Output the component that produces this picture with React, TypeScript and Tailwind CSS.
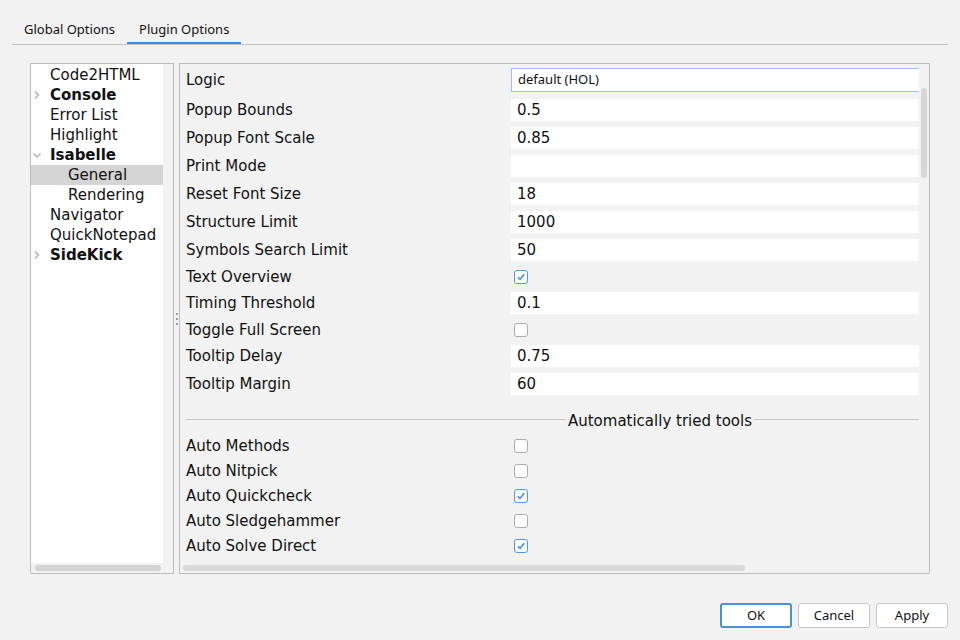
import { ReactNode } from "react";

const dejavu = { fontFamily: '"DejaVu Sans", sans-serif' };
const noto = { fontFamily: '"Noto Sans", sans-serif' };

const treeItems: { label: string; bold?: boolean; level: number; arrow?: "right" | "down"; selected?: boolean }[] = [
  { label: "Code2HTML", level: 0 },
  { label: "Console", level: 0, bold: true, arrow: "right" },
  { label: "Error List", level: 0 },
  { label: "Highlight", level: 0 },
  { label: "Isabelle", level: 0, bold: true, arrow: "down" },
  { label: "General", level: 1, selected: true },
  { label: "Rendering", level: 1 },
  { label: "Navigator", level: 0 },
  { label: "QuickNotepad", level: 0 },
  { label: "SideKick", level: 0, bold: true, arrow: "right" },
];

type Opt = { label: string; value?: string; check?: boolean };

const options: Opt[] = [
  { label: "Popup Bounds", value: "0.5" },
  { label: "Popup Font Scale", value: "0.85" },
  { label: "Print Mode", value: "" },
  { label: "Reset Font Size", value: "18" },
  { label: "Structure Limit", value: "1000" },
  { label: "Symbols Search Limit", value: "50" },
  { label: "Text Overview", check: true },
  { label: "Timing Threshold", value: "0.1" },
  { label: "Toggle Full Screen", check: false },
  { label: "Tooltip Delay", value: "0.75" },
  { label: "Tooltip Margin", value: "60" },
];

const autoTools: Opt[] = [
  { label: "Auto Methods", check: false },
  { label: "Auto Nitpick", check: false },
  { label: "Auto Quickcheck", check: true },
  { label: "Auto Sledgehammer", check: false },
  { label: "Auto Solve Direct", check: true },
];

const Arrow = ({ dir }: { dir: "right" | "down" }) => (
  <svg width="10" height="10" viewBox="0 0 10 10" className="shrink-0">
    {dir === "right" ? (
      <path d="M3 1.5 L6.5 5 L3 8.5" fill="none" stroke="#b0b0b0" strokeWidth="1.4" />
    ) : (
      <path d="M1.5 3.5 L5 7 L8.5 3.5" fill="none" stroke="#b0b0b0" strokeWidth="1.4" />
    )}
  </svg>
);

const CheckBox = ({ checked }: { checked: boolean }) => (
  <div
    className={`ml-[3px] w-[14px] h-[14px] rounded-[3px] border bg-white flex items-center justify-center ${
      checked ? "border-[#4f97e3]" : "border-[#ababab]"
    }`}
  >
    {checked && (
      <svg width="10" height="10" viewBox="0 0 10 10">
        <path d="M1.8 5.2 L4 7.4 L8.2 2.2" fill="none" stroke="#3f8fe2" strokeWidth="1.6" />
      </svg>
    )}
  </div>
);

const Row = ({ label, children, className }: { label: string; children: ReactNode; className: string }) => (
  <div className={`shrink-0 flex items-center ${className}`}>
    <div className="w-[325px] text-[15px] leading-[18px] text-[#111]" style={dejavu}>
      {label}
    </div>
    <div className="w-[408px] flex items-center">{children}</div>
  </div>
);

const Button = ({ children, primary }: { children: ReactNode; primary?: boolean }) => (
  <button
    className={`w-[72px] h-[25px] rounded-[3px] bg-white text-[13px] text-[#111] flex items-center justify-center ${
      primary ? "border-2 border-[#4a90d9]" : "border border-[#c6c6c6]"
    }`}
    style={noto}
  >
    {children}
  </button>
);

const App = () => {
  return (
    <div className="w-[960px] h-[640px] bg-[#f2f2f2] flex flex-col overflow-hidden">
      {/* Tabs */}
      <div className="mx-[12px] pt-[14px] flex border-b border-[#c4c4c4]" style={noto}>
        <div className="h-[30px] px-[12px] pt-[3px] flex items-center text-[13px] text-[#111] border-b-2 border-transparent">
          Global Options
        </div>
        <div className="h-[30px] px-[12px] pt-[3px] flex items-center text-[13px] text-[#111] border-b-2 border-[#3d8bd4]">
          Plugin Options
        </div>
      </div>

      {/* Panels */}
      <div className="mt-[18px] ml-[30px] flex h-[511px]">
        {/* Tree */}
        <div className="w-[144px] border border-[#bdbdbd] flex flex-col">
          <div className="flex flex-1 min-h-0">
            <div className="w-[132px] pt-[1px] bg-white" style={dejavu}>
              {treeItems.map((t) => (
                <div
                  key={t.label}
                  className={`h-[20px] flex items-center text-[15px] text-[#111] ${t.selected ? "bg-[#d4d4d4]" : ""} ${
                    t.bold ? "font-bold" : ""
                  }`}
                >
                  <div className="w-[19px] pl-[1px] flex items-center">{t.arrow && <Arrow dir={t.arrow} />}</div>
                  <span className={t.level === 1 ? "pl-[18px]" : ""}>{t.label}</span>
                </div>
              ))}
            </div>
            <div className="flex-1" />
          </div>
          <div className="h-[10px] flex items-center pl-[4px]">
            <div className="w-[126px] h-[6px] rounded-full bg-[#d4d4d4]" />
          </div>
        </div>

        {/* Splitter */}
        <div className="w-[5px] flex flex-col items-center justify-center gap-[3px]">
          <div className="w-[2px] h-[2px] bg-[#a0a0a0]" />
          <div className="w-[2px] h-[2px] bg-[#a0a0a0]" />
          <div className="w-[2px] h-[2px] bg-[#a0a0a0]" />
        </div>

        {/* Options */}
        <div className="w-[751px] border border-[#bdbdbd] flex flex-col">
          <div className="flex flex-1 min-h-0">
            <div className="w-[739px] shrink-0 pl-[6px] flex flex-col overflow-hidden">
              <Row label="Logic" className="h-[32px]">
                <div
                  className="w-[420px] shrink-0 h-[24px] bg-white border border-[#9cc0e8] pl-[6px] flex items-center text-[13px] text-[#111]"
                  style={noto}
                >
                  default (HOL)
                </div>
              </Row>
              {options.map((o) =>
                o.check === undefined ? (
                  <Row key={o.label} label={o.label} className="h-[28px]">
                    <div className="w-full h-[22px] bg-white pl-[6px] flex items-center text-[15px] text-[#111]" style={dejavu}>
                      {o.value}
                    </div>
                  </Row>
                ) : (
                  <Row key={o.label} label={o.label} className="h-[25px]">
                    <CheckBox checked={o.check} />
                  </Row>
                )
              )}
              {/* Separator */}
              <div className="shrink-0 mt-[14px] flex items-start w-[733px]">
                <div className="flex-1 h-px mt-[7px] bg-[#c8c8c8]" />
                <div className="px-[2px] text-[15px] leading-[18px] text-[#111]" style={dejavu}>
                  Automatically tried tools
                </div>
                <div className="w-[165px] h-px mt-[7px] bg-[#c8c8c8]" />
              </div>
              <div className="shrink-0 mt-[3px] flex flex-col">
                {autoTools.map((o) => (
                  <Row key={o.label} label={o.label} className="h-[25px]">
                    <CheckBox checked={!!o.check} />
                  </Row>
                ))}
              </div>
            </div>
            <div className="flex-1 flex justify-center">
              <div className="mt-[24px] w-[6px] h-[90px] rounded-full bg-[#d6d6d6]" />
            </div>
          </div>
          <div className="h-[10px] flex items-center pl-[3px]">
            <div className="w-[562px] h-[6px] rounded-full bg-[#d8d8d8]" />
          </div>
        </div>
      </div>

      {/* Buttons */}
      <div className="mt-[29px] pr-[12px] flex justify-end gap-[6px]">
        <Button primary>OK</Button>
        <Button>Cancel</Button>
        <Button>Apply</Button>
      </div>
    </div>
  );
};

export default App;
